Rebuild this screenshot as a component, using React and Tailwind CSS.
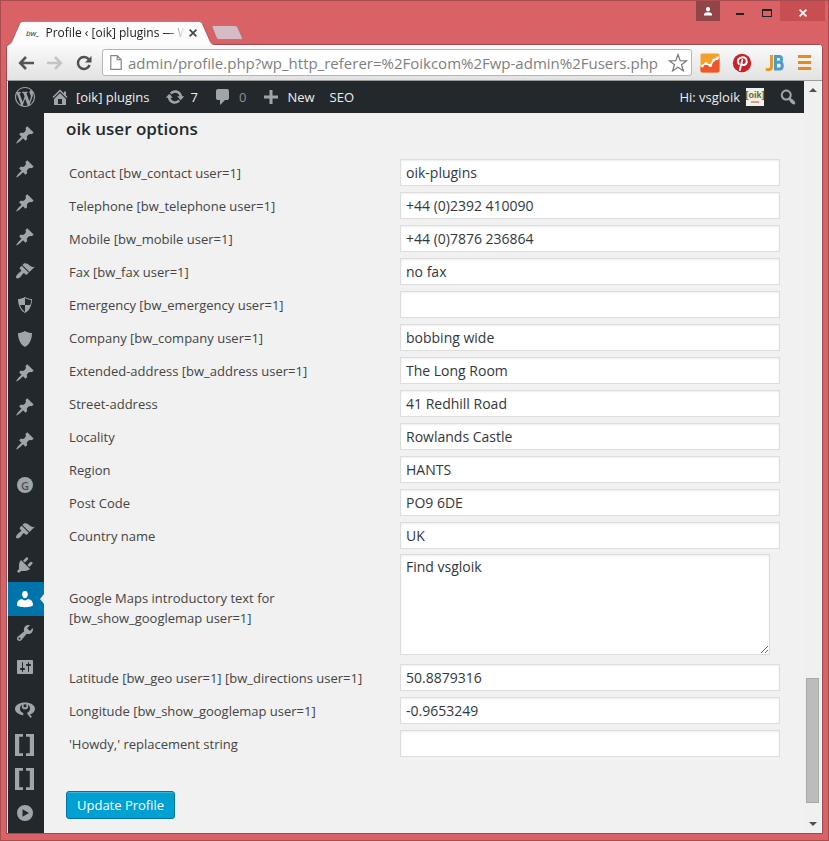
import React from "react";

const PIN =
  "M10.44 3.02l1.82-1.82 6.36 6.35-1.83 1.82c-1.05-.68-2.48-.57-3.41.36l-.75.75c-.92.93-1.04 2.35-.35 3.41l-1.83 1.82-2.41-2.41-2.8 2.79c-.42.42-3.38 2.71-3.8 2.29s1.86-3.39 2.28-3.81l2.79-2.79L4.1 9.36l1.83-1.82c1.05.69 2.48.57 3.4-.36l.75-.75c.93-.92 1.05-2.35.36-3.41z";
const HOME =
  "M16 8.5l1.53 1.53-1.06 1.06L10 4.6l-6.47 6.49-1.06-1.06L10 2.5l4 4v-2h2v4zm-6-2.46l6 5.99V18H4v-5.97zM12 17v-5H8v5h4z";
const UPDATE =
  "M10.2 3.28c3.53 0 6.43 2.61 6.92 6h2.08l-3.5 4-3.5-4h2.32c-.45-1.97-2.21-3.45-4.32-3.45-1.45 0-2.73.71-3.54 1.78L4.95 5.66C6.23 4.2 8.11 3.28 10.2 3.28zm-.4 13.44c-3.52 0-6.43-2.61-6.92-6H.8l3.5-4c1.17 1.33 2.33 2.67 3.5 4H5.48c.45 1.97 2.21 3.45 4.32 3.45 1.45 0 2.73-.71 3.54-1.78l1.71 1.95c-1.28 1.46-3.15 2.38-5.25 2.38z";
const COMMENT =
  "M5 2h9q.82 0 1.41.59T16 4v7q0 .82-.59 1.41T14 13h-2l-5 5v-5H5q-.82 0-1.41-.59T3 11V4q0-.82.59-1.41T5 2z";
const PLUS = "M17 8.5v3h-5.5V17h-3v-5.5H3v-3h5.500V3h3v5.500z";
const SEARCH =
  "M12.14 4.18c1.87 1.87 2.11 4.75.72 6.89.12.1.22.21.36.31.2.16.47.36.81.59.34.24.56.39.66.47.42.31.73.57.94.78.32.32.6.65.84 1 .25.35.44.69.59 1.04.14.35.21.68.18 1-.02.32-.14.59-.36.81s-.49.34-.81.36c-.31.02-.65-.04-.99-.19-.35-.14-.7-.34-1.04-.59-.35-.24-.68-.52-1-.84-.21-.21-.47-.52-.77-.93-.1-.13-.25-.35-.47-.66-.22-.32-.4-.57-.56-.78-.16-.2-.29-.35-.44-.5-2.07 1.09-4.69.76-6.44-.98-2.14-2.15-2.14-5.64 0-7.78 2.15-2.15 5.63-2.15 7.78 0zm-1.41 6.36c1.36-1.37 1.36-3.58 0-4.95-1.37-1.37-3.59-1.37-4.95 0-1.37 1.37-1.37 3.58 0 4.950 1.36 1.37 3.58 1.37 4.95 0z";
const BRUSH =
  "M14.48 11.06L7.41 3.99l1.5-1.5c.5-.56 2.3-.47 3.51.32 1.21.8 1.43 1.28 2.91 2.1 1.18.64 2.45 1.26 4.45.85zm-.71.71L6.7 4.7 4.93 6.47c-.39.39-.39 1.02 0 1.41l1.06 1.06c.39.39.39 1.03 0 1.42-.6.6-1.43 1.11-2.21 1.69-.35.26-.7.53-1.01.84C1.43 14.23.4 16.08 1.4 17.07c.99 1 2.84-.03 4.18-1.36.31-.31.58-.66.85-1.02.57-.78 1.08-1.61 1.69-2.21.39-.39 1.02-.39 1.41 0l1.06 1.06c.39.39 1.02.39 1.41 0z";
const PLUG =
  "M13.11 4.36L9.87 7.6 8 5.73l3.24-3.24c.35-.34 1.05-.2 1.56.32.52.51.66 1.21.31 1.55zm-8 1.77l.91-1.12 9.01 9.01-1.19.84c-.71.71-2.63 1.16-3.82 1.16H6.14L4.9 17.26c-.59.59-1.54.59-2.12 0-.59-.58-.59-1.53 0-2.12l1.24-1.24v-3.88c0-1.13.4-3.19 1.09-3.89zm7.26 3.97l3.24-3.24c.34-.35 1.04-.21 1.55.31.52.51.66 1.21.31 1.55l-3.24 3.25z";
const USER =
  "M10 9.25c-2.27 0-2.9-3.2-2.9-3.440C6.900 4.020 7.820 2 9.970 2c2.160 0 3.080 2.020 2.880 3.810 0 0-.58 3.440-2.850 3.440zM7.300 10c.7 1 1.600 1.400 2.700 1.400s2-.4 2.700-1.400c3 .2 5.200 2.400 5.200 5v1.600c-1.500 1-4.600 1.600-7.900 1.600s-6.400-.6-7.900-1.600V15c0-2.600 2.200-4.800 5.200-5z";
const WRENCH =
  "M16.68 9.77c-1.34 1.34-3.3 1.67-4.95.99l-5.41 6.52c-.99.99-2.59.99-3.58 0s-.99-2.59 0-3.57l6.52-5.42c-.68-1.65-.35-3.61.99-4.95 1.28-1.28 3.12-1.62 4.72-1.06l-2.89 2.89 2.82 2.82 2.86-2.87c.53 1.58.18 3.39-1.08 4.65zM3.81 16.21c.4.39 1.04.39 1.43 0 .4-.4.4-1.04 0-1.43-.39-.4-1.03-.4-1.43 0-.39.39-.39 1.03 0 1.43z";
const SLIDERS =
  "M18 16V4c0-.55-.45-1-1-1H3c-.55 0-1 .45-1 1v12c0 .55.45 1 1 1h14c.55 0 1-.45 1-1zM8 11h1c.55 0 1 .45 1 1s-.45 1-1 1H8v1.5c0 .28-.22.5-.5.5s-.5-.22-.5-.5V13H6c-.55 0-1-.45-1-1s.45-1 1-1h1V5.5c0-.28.22-.5.5-.5s.5.22.5.5V11zm5-2h-1c-.55 0-1-.45-1-1s.45-1 1-1h1V5.5c0-.28.22-.5.5-.5s.5.22.5.5V7h1c.55 0 1 .45 1 1s-.45 1-1 1h-1v5.5c0 .28-.22.5-.5.5s-.5-.22-.5-.5V9z";
const SHIELD =
  "M10 2s3 2 7 2c0 11-7 14-7 14S3 15 3 4c4 0 7-2 7-2zm0 8h5s1-1 1-5c0 0-5-1-6-2v7H5c1 4 5 7 5 7v-7z";
const SHIELD_ALT = "M10 2s3 2 7 2c0 11-7 14-7 14S3 15 3 4c4 0 7-2 7-2z";
const BRACKETS = "M0 0h8v2.800H4.200v16.400H8V22H0zM11 0h8v22h-8v-2.800h3.800V2.800H11z";
const PLAY =
  "M10 2a8 8 0 1 0 0 16 8 8 0 0 0 0-16zM7.500 6.200L14 10l-6.500 3.800z";
const WORDPRESS =
  "M20 10c0-5.51-4.49-10-10-10C4.48 0 0 4.49 0 10c0 5.52 4.48 10 10 10 5.51 0 10-4.48 10-10zM7.78 15.37L4.37 6.22c.55-.02 1.17-.08 1.17-.08.5-.06.44-1.13-.06-1.11 0 0-1.45.11-2.37.11-.18 0-.37 0-.58-.01C4.12 2.69 6.87 1.11 10 1.11c2.33 0 4.45.87 6.05 2.34-.68-.11-1.65.39-1.65 1.58 0 .74.45 1.36.9 2.1.35.61.55 1.36.55 2.46 0 1.49-1.4 5-1.4 5l-3.03-8.37c.54-.02.82-.17.82-.17.5-.05.44-1.25-.06-1.22 0 0-1.44.12-2.38.12-.87 0-2.33-.12-2.33-.12-.5-.03-.56 1.2-.06 1.22l.92.08 1.26 3.41zM17.41 10c.24-.64.74-1.87.43-4.25.7 1.29 1.05 2.71 1.05 4.25 0 3.29-1.73 6.24-4.4 7.78.97-2.59 1.94-5.2 2.92-7.78zM6.1 18.09C3.12 16.65 1.11 13.53 1.11 10c0-1.3.23-2.48.72-3.59C3.25 10.3 4.67 14.2 6.1 18.09zm4.03-6.63l2.58 6.98c-.86.29-1.76.45-2.71.45-.79 0-1.57-.11-2.29-.33.81-2.38 1.62-4.74 2.42-7.1z";

function Icon({ d, className = "size-5", viewBox = "0 0 20 20" }) {
  return (
    <svg viewBox={viewBox} className={className} fill="currentColor" aria-hidden="true">
      <path fillRule="evenodd" d={d} />
    </svg>
  );
}

function Wp({ className = "size-5" }) {
  return (
    <svg viewBox="0 0 20 20" className={className} fill="currentColor" aria-hidden="true">
      <path d={WORDPRESS} />
    </svg>
  );
}

const RoundG = () => (
  <span className="flex size-4 items-center justify-center rounded-full bg-[#a0a5aa] text-[11px] leading-none font-semibold text-[#4a4f54]">
    G
  </span>
);

const Yoast = () => (
  <svg viewBox="0 0 20 16" className="h-4 w-5" aria-hidden="true">
    <path
      d="M10 .5C4.500 .5 0 3.100 0 6.800c0 3.500 3.600 6 8.300 6.400V11C6 10.500 5 8.800 5 6.800c0-1.700.6-3 1.900-4.200v3.100L8.400 7.200h3.200l1.500-1.500V2.600C14.400 3.800 15 5.100 15 6.800c0 1.800-1.200 3.200-3.200 4.200l3.500 4.800 1.700-.7-2-2.700c3-1 5-3 5-5.600C20 3.100 15.500.5 10 .5z"
      fill="currentColor"
    />
    <path d="M8.600 2.400h2.800v2.800H8.600z" fill="#23282d" />
  </svg>
);

const Brackets = () => <Icon d={BRACKETS} viewBox="0 0 19 22" className="mr-[2px] h-[22px] w-[19px]" />;

const menu = [
  { name: "Posts", d: PIN },
  { name: "Badges", d: PIN },
  { name: "Plugins list", d: PIN },
  { name: "Versions", d: PIN },
  { name: "Themes", d: BRUSH },
  { name: "Security", d: SHIELD },
  { name: "Protection", d: SHIELD_ALT },
  { name: "Shortcodes", d: PIN },
  { name: "Examples", d: PIN },
  { name: "Files", d: PIN },
  { name: "Genesis", node: <RoundG />, space: "mt-[10px]" },
  { name: "Appearance", d: BRUSH, space: "mt-3" },
  { name: "Plugins", d: PLUG },
  { name: "Users", d: USER, current: true },
  { name: "Tools", d: WRENCH },
  { name: "Settings", d: SLIDERS },
  { name: "SEO", node: <Yoast />, space: "mt-[9px]" },
  { name: "oik options", node: <Brackets />, space: "mt-px" },
  { name: "oik themes", node: <Brackets /> },
  { name: "Collapse menu", d: PLAY },
];

const fields = [
  { id: "contact", label: "Contact [bw_contact user=1]", value: "oik-plugins" },
  { id: "telephone", label: "Telephone [bw_telephone user=1]", value: "+44 (0)2392 410090" },
  { id: "mobile", label: "Mobile [bw_mobile user=1]", value: "+44 (0)7876 236864" },
  { id: "fax", label: "Fax [bw_fax user=1]", value: "no fax" },
  { id: "emergency", label: "Emergency [bw_emergency user=1]", value: "" },
  { id: "company", label: "Company [bw_company user=1]", value: "bobbing wide" },
  { id: "extended", label: "Extended-address [bw_address user=1]", value: "The Long Room" },
  { id: "street", label: "Street-address", value: "41 Redhill Road" },
  { id: "locality", label: "Locality", value: "Rowlands Castle" },
  { id: "region", label: "Region", value: "HANTS" },
  { id: "postcode", label: "Post Code", value: "PO9 6DE" },
  { id: "country", label: "Country name", value: "UK" },
  {
    id: "gmap",
    label: "Google Maps introductory text for [bw_show_googlemap user=1]",
    value: "Find vsgloik",
    area: true,
  },
  { id: "lat", label: "Latitude [bw_geo user=1] [bw_directions user=1]", value: "50.8879316" },
  { id: "long", label: "Longitude [bw_show_googlemap user=1]", value: "-0.9653249" },
  { id: "howdy", label: "'Howdy,' replacement string", value: "" },
];

function TitleBar() {
  return (
    <header className="flex h-[43px] items-end justify-between pl-[6px]">
      <div className="flex items-end">
        <div className="relative z-10 -mb-px flex h-6 w-[208px] items-center pr-[15px] pl-[19px]">
          <svg viewBox="0 0 208 24" className="absolute inset-0 h-6 w-[208px]" aria-hidden="true">
            <path d="M0 24c3-.5 4-2 5-4L12 4c1-2.500 2-4 5-4h174c3 0 4 1.500 5 4l7 16c1 2 2 3.500 5 4z" fill="#fcfcfc" />
            <path
              d="M0 24c3-.5 4-2 5-4L12 4c1-2.500 2-3.600 5-3.600h174c3 0 4 1.100 5 3.600l7 16c1 2 2 3.500 5 4"
              fill="none"
              stroke="#a04a4e"
              strokeWidth=".8"
            />
          </svg>
          <i className="relative text-[8px] leading-none text-[#333]">bw_</i>
          <span className="relative ml-[6px] w-[140px] text-[12px] leading-5 whitespace-nowrap text-[#222] [mask-image:linear-gradient(to_right,#000_122px,transparent_140px)]">
            Profile ‹ [oik] plugins — W
          </span>
          <button aria-label="Close tab" className="relative ml-1 shrink-0">
            <svg viewBox="0 0 8 8" className="size-2" stroke="#444" strokeWidth="1.700" aria-hidden="true">
              <path d="M.6.6l6.800 6.800M7.400.6L.6 7.400" />
            </svg>
          </button>
        </div>
        <button aria-label="New tab" className="-ml-1 pb-[3px]">
          <svg viewBox="0 0 32 16" className="h-4 w-8" aria-hidden="true">
            <path d="M3 .5h20c2 0 3 .5 4 2.500l4 9c.7 2 .5 2.500-1.500 2.500H9c-2 0-3-.5-4-2.500L1.500 3C.8 1 1 .5 3 .5z" fill="#d3bcc6" stroke="#b9686f" strokeWidth=".8" />
          </svg>
        </button>
      </div>
      <div className="flex h-5 self-start pr-[3px]">
        <button aria-label="User" className="flex w-6 items-center justify-center bg-[#924549]">
          <svg viewBox="0 0 10 9" className="h-[9px] w-[10px]" fill="#fff" aria-hidden="true">
            <path d="M5 0a2 2 0 0 1 2 2.200C7 3.500 6 4.500 5 4.500S3 3.500 3 2.200A2 2 0 0 1 5 0zM1 8.500V7.200C1 6 3 5.200 5 5.200s4 .8 4 2v1.300z" />
          </svg>
        </button>
        <button aria-label="Minimize" className="flex w-10 items-end justify-center pb-[6px]">
          <span className="h-[2px] w-2 bg-[#222]" />
        </button>
        <button aria-label="Maximize" className="flex w-5 items-center pt-1">
          <span className="ml-[2px] h-2 w-[10px] border border-t-2 border-[#222]" />
        </button>
        <button aria-label="Close" className="flex w-[45px] items-center justify-center bg-[#c74f51]">
          <svg viewBox="0 0 8 8" className="mt-1 size-2" stroke="#fff" strokeWidth="1.700" aria-hidden="true">
            <path d="M.6.6l6.800 6.800M7.400.6L.6 7.400" />
          </svg>
        </button>
      </div>
    </header>
  );
}

function Toolbar() {
  return (
    <div className="flex h-9 items-center rounded-t-[3px] border-b border-[#9b9b9b] bg-gradient-to-b from-[#fafafa] to-[#e2e2e2] pr-[11px] pl-[11px]">
      <button aria-label="Back" className="shrink-0">
        <svg viewBox="0 0 16 14" className="h-[14px] w-4" fill="none" stroke="#555" strokeWidth="2.600" aria-hidden="true">
          <path d="M8 1L2.200 7 8 13M2.500 7H16" />
        </svg>
      </button>
      <button aria-label="Forward" className="ml-[13px] shrink-0">
        <svg viewBox="0 0 16 14" className="h-[14px] w-4" fill="none" stroke="#c4c4c4" strokeWidth="2.600" aria-hidden="true">
          <path d="M8 1l5.800 6L8 13M13.500 7H0" />
        </svg>
      </button>
      <button aria-label="Reload" className="ml-[13px] shrink-0">
        <svg viewBox="0 0 16 16" className="size-4" aria-hidden="true">
          <path d="M12.700 4.300A6 6 0 1 0 13.600 10" fill="none" stroke="#505050" strokeWidth="2.500" />
          <path d="M15.500 1v6.500H9z" fill="#505050" />
        </svg>
      </button>
      <div className="ml-[10px] flex h-[27px] min-w-0 flex-1 items-center rounded-[3px] border border-[#b5b5b5] bg-white pr-[3px] pl-[7px]">
        <svg viewBox="0 0 12 15" className="h-[15px] w-3 shrink-0" fill="#fff" stroke="#888" strokeWidth="1.200" aria-hidden="true">
          <path d="M.8.6h6.400l4 4v9.800H.8zM7.200.6v4h4" />
        </svg>
        <input
          aria-label="Address"
          defaultValue="admin/profile.php?wp_http_referer=%2Foikcom%2Fwp-admin%2Fusers.php"
          className="ml-[6px] min-w-0 flex-1 bg-transparent text-[15px] leading-6 text-[#808080] outline-none"
        />
        <button aria-label="Bookmark" className="shrink-0">
          <svg viewBox="0 0 20 20" className="size-5" fill="#fff" stroke="#777" strokeWidth="1.200" aria-hidden="true">
            <path d="M10 1.500l2.200 6.100 6.500.2-5.200 3.900 1.900 6.200L10 14.200l-5.400 3.700 1.900-6.200-5.200-3.900 6.500-.2z" />
          </svg>
        </button>
      </div>
      <div className="ml-2 flex shrink-0 items-center">
        <button aria-label="Analytics">
          <svg viewBox="0 0 20 20" className="size-5" aria-hidden="true">
            <rect x=".5" y=".5" width="19" height="19" rx="1.500" fill="#f6a02c" />
            <path d="M.5 14l4-3.500 5 3 4-6 6-3v13a2 2 0 0 1-2 2h-15a2 2 0 0 1-2-2z" fill="#f0562a" />
            <path d="M1.500 13.500l4-3 5 2 3.500-6 3.500-.5L19 4" fill="none" stroke="#fff" strokeWidth="1.500" />
            <circle cx="2.500" cy="13" r="1.400" fill="#fff" />
            <circle cx="6" cy="10.500" r="1.500" fill="#fff" />
            <circle cx="10.500" cy="12.500" r="1.600" fill="#fff" />
            <circle cx="14" cy="7" r="1.500" fill="#fff" />
            <circle cx="17.500" cy="5" r="1.400" fill="#fff" />
          </svg>
        </button>
        <button aria-label="Pinterest" className="ml-3">
          <svg viewBox="0 0 20 20" className="size-5" aria-hidden="true">
            <circle cx="10" cy="10" r="9.200" fill="#cb2027" />
            <path d="M6.800 11C4.500 7.500 7 4.200 10.500 4.200c5 0 5.500 6.800 1.700 7.800-1 .2-1.800-.2-2.200-.8M10.300 7l-2.500 10" fill="none" stroke="#fff" strokeWidth="1.900" strokeLinecap="round" />
          </svg>
        </button>
        <button aria-label="JB" className="ml-[13px] w-5">
          <svg viewBox="0 0 20 18" className="h-[18px] w-5" fill="none" strokeWidth="3" aria-hidden="true">
            <path d="M6.500 1v11.500c0 2-1.500 3.200-3.500 3.200L.8 15.300" stroke="#e59a2c" />
            <path d="M10.500 2.500h3.800c3 0 3 5.800 0 5.800h-3.800 4.200c3.400 0 3.400 6.700 0 6.700h-4.200z" stroke="#4a9ccb" />
          </svg>
        </button>
        <button aria-label="Menu" className="ml-[13px] flex w-[13px] flex-col gap-[3px]">
          <span className="h-[3px] bg-[#e98a14]" />
          <span className="h-[3px] bg-[#e98a14]" />
          <span className="h-[3px] bg-[#e98a14]" />
        </button>
      </div>
    </div>
  );
}

function AdminBar() {
  return (
    <nav className="flex h-8 items-center bg-[#23282d] pr-[6px] pl-[7px] text-[13px] leading-8 font-medium text-[#eee]">
      <a href="#wp" aria-label="WordPress" className="text-[#a0a5aa]">
        <Wp />
      </a>
      <a href="#site" className="ml-[15px] flex items-center">
        <Icon d={HOME} className="mr-[6px] size-5 text-[#a0a5aa]" />
        [oik] plugins
      </a>
      <a href="#updates" className="ml-[15px] flex items-center">
        <Icon d={UPDATE} className="mr-[6px] size-5 text-[#a0a5aa]" />7
      </a>
      <a href="#comments" className="ml-[15px] flex items-center text-[#8b9095]">
        <Icon d={COMMENT} className="mr-[6px] size-5 text-[#a0a5aa]" />0
      </a>
      <a href="#new" className="ml-[15px] flex items-center">
        <Icon d={PLUS} className="mr-[6px] size-5 text-[#a0a5aa]" />
        New
      </a>
      <a href="#seo" className="ml-[15px]">
        SEO
      </a>
      <a href="#me" className="ml-auto flex items-center gap-[6px]">
        Hi: vsgloik
        <span className="flex h-[18px] w-[18px] flex-col items-center justify-center bg-[#f0efe8]">
          <span className="text-[9px] leading-[9px] font-bold text-[#5f6b22] [font-family:'Liberation_Sans',sans-serif]">[oik]</span>
          <span className="mt-px h-[2px] w-2 bg-[#e29a85]" />
        </span>
      </a>
      <button aria-label="Search" className="ml-[14px] text-[#a0a5aa]">
        <Icon d={SEARCH} />
      </button>
    </nav>
  );
}

function SideMenu() {
  return (
    <nav className="w-9 shrink-0 bg-[#23282d] pt-[5px]">
      <ul>
        {menu.map((m) => (
          <li key={m.name} className={m.space}>
            <a
              href="#menu"
              aria-label={m.name}
              className={
                m.current
                  ? "relative flex h-[34px] items-center justify-center bg-[#0073aa] pr-[2px] text-white"
                  : "flex h-[34px] items-center justify-center pr-[2px] text-[#a0a5aa]"
              }
            >
              {m.node || <Icon d={m.d} />}
              {m.current && (
                <span className="absolute top-3 right-0 border-y-[5px] border-r-4 border-y-transparent border-r-[#f1f1f1]" />
              )}
            </a>
          </li>
        ))}
      </ul>
    </nav>
  );
}

function Field({ field }) {
  return (
    <div className={field.area ? "flex h-[109px] items-start pt-[2px]" : "flex h-[33px] items-center"}>
      <label
        htmlFor={field.id}
        className={
          field.area
            ? "w-[331px] shrink-0 self-center pr-24 text-[13px] leading-5"
            : "w-[331px] shrink-0 text-[13px] leading-5"
        }
      >
        {field.label}
      </label>
      {field.area ? (
        <textarea
          id={field.id}
          defaultValue={field.value}
          className="mr-[10px] h-[101px] min-w-0 flex-1 border border-[#ddd] bg-white px-[5px] py-[2px] text-[14px] leading-5 text-[#32373c] shadow-[inset_0_1px_2px_rgba(0,0,0,0.07)] outline-none"
        />
      ) : (
        <input
          id={field.id}
          type="text"
          defaultValue={field.value}
          className="h-[27px] min-w-0 flex-1 border border-[#ddd] bg-white px-[5px] text-[14px] text-[#32373c] shadow-[inset_0_1px_2px_rgba(0,0,0,0.07)] outline-none"
        />
      )}
    </div>
  );
}

function Scrollbar() {
  return (
    <div className="flex w-[17px] shrink-0 flex-col items-center bg-[#f0f0f0] pt-[7px] pb-[7px]" aria-hidden="true">
      <span className="border-x-4 border-b-4 border-x-transparent border-b-[#505050]" />
      <span className="flex-1" />
      <span className="h-[125px] w-[13px] border border-[#a8a8a8] bg-[#bcbcbc]" />
      <span className="h-[19px]" />
      <span className="border-x-4 border-t-4 border-x-transparent border-t-[#505050]" />
    </div>
  );
}

export default function App() {
  return (
    <div className="flex min-h-screen w-full flex-col border border-[#a84c50] bg-[#d96267] [font-family:'Open_Sans','Noto_Sans',sans-serif]">
      <TitleBar />
      <div className="mx-[5px] mb-[6px] flex flex-1 flex-col rounded-t-[4px] border border-[#a04a4e] bg-white">
        <Toolbar />
        <div className="mx-px flex flex-1">
          <div className="flex min-w-0 flex-1 flex-col">
            <AdminBar />
            <div className="flex flex-1 bg-[#f1f1f1]">
              <SideMenu />
              <main className="min-w-0 flex-1 pr-6 pl-[22px] text-[#444]">
                <h3 className="pt-1 text-[17px] leading-6 font-semibold text-[#23282d]">oik user options</h3>
                <form className="pt-[15px] pl-[3px]">
                  {fields.map((f) => (
                    <Field key={f.id} field={f} />
                  ))}
                </form>
                <button className="mt-[31px] h-7 rounded-[3px] border border-[#0073aa] bg-[#00a0d2] px-[10px] text-[13px] leading-none font-medium text-white shadow-[inset_0_1px_0_rgba(120,200,230,0.5)]">
                  Update Profile
                </button>
              </main>
            </div>
          </div>
          <Scrollbar />
        </div>
      </div>
    </div>
  );
}
